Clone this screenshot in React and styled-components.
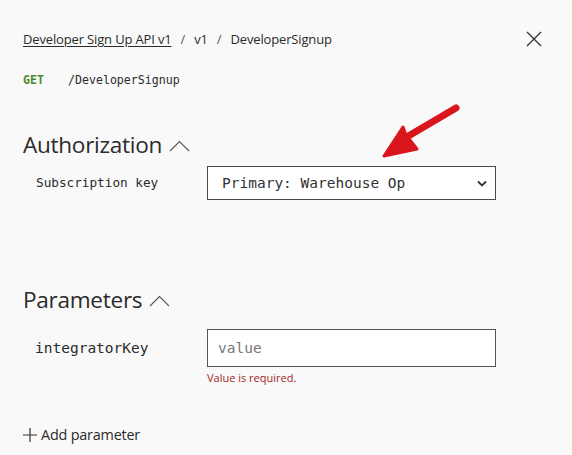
import React from "react";
import styled, { createGlobalStyle } from "styled-components";

const Global = createGlobalStyle`
  html, body {
    margin: 0;
    padding: 0;
    background: #f9f9f9;
  }
  body {
    font-family: "Open Sans", "Noto Sans", sans-serif;
    color: #2b2b2b;
  }
`;

const Page = styled.div`
  position: relative;
  width: 572px;
  height: 455px;
  overflow: hidden;
  padding: 0 30px 0 23px;
  box-sizing: border-box;
`;

const Header = styled.div`
  display: flex;
  align-items: center;
  justify-content: space-between;
  height: 28px;
  margin-top: 25px;
`;

const Crumbs = styled.div`
  display: flex;
  align-items: center;
  gap: 8px;
  font-size: 13px;
  letter-spacing: -0.15px;
  > a {
    color: #2b2b2b;
    text-decoration: underline;
    text-underline-offset: 2px;
  }
`;

const Sep = styled.span`
  color: #555;
  padding: 0 1px;
`;

const Close = styled.button`
  border: 0;
  background: none;
  padding: 0;
  width: 16px;
  height: 16px;
  display: flex;
  cursor: pointer;
`;

const Method = styled.div`
  display: flex;
  align-items: center;
  margin-top: 19px;
  height: 16px;
  font-family: "DejaVu Sans Mono", monospace;
  font-size: 11.6px;
  > b {
    color: #4a8a2a;
    width: 45px;
  }
  > span {
    color: #2b2b2b;
  }
`;

const Section = styled.section`
  margin-top: ${(p) => p.$top}px;
`;

const Heading = styled.h2`
  display: flex;
  align-items: center;
  gap: 7px;
  margin: 0;
  height: 30px;
  font-weight: 400;
  font-size: 22.6px;
  letter-spacing: -0.3px;
  color: #2b2b2b;
  > svg {
    margin-top: 4px;
  }
`;

const Row = styled.div`
  display: grid;
  grid-template-columns: 184px 289px;
  align-items: start;
  margin-top: ${(p) => p.$top}px;
`;

const Label = styled.div`
  font-family: "DejaVu Sans Mono", monospace;
  font-size: ${(p) => p.$size}px;
  color: #2b2b2b;
  padding-left: ${(p) => p.$pad}px;
  line-height: ${(p) => p.$lh}px;
`;

const SelectBox = styled.div`
  display: flex;
  align-items: center;
  justify-content: space-between;
  height: 34px;
  box-sizing: border-box;
  border: 1px solid #4a4a4a;
  background: #fff;
  padding: 0 8px 0 14px;
  font-family: "DejaVu Sans Mono", monospace;
  font-size: 14.5px;
  color: #333;
`;

const Field = styled.div`
  display: flex;
  flex-direction: column;
`;

const InputBox = styled.div`
  height: 38px;
  box-sizing: border-box;
  border: 1px solid #555;
  background: #fff;
  display: flex;
  align-items: center;
  padding-left: 10px;
  font-family: "DejaVu Sans Mono", monospace;
  font-size: 14.5px;
  color: #777;
`;

const Error = styled.div`
  color: #a4262c;
  font-size: 11px;
  margin-top: 3px;
`;

const AddParam = styled.button`
  display: flex;
  align-items: center;
  gap: 4px;
  margin-top: 40px;
  border: 0;
  background: none;
  padding: 0;
  font-family: "Open Sans", sans-serif;
  font-size: 14.4px;
  letter-spacing: -0.2px;
  color: #2b2b2b;
`;

const Pointer = styled.svg`
  position: absolute;
  left: 377px;
  top: 100px;
`;

const ChevronUp = () => (
  <svg width="21" height="12" viewBox="0 0 21 12" fill="none">
    <path d="M1 11 L10.5 1.5 L20 11" stroke="#555" strokeWidth="1.1" />
  </svg>
);

export default function App() {
  return (
    <Page>
      <Global />
      <Header>
        <Crumbs>
          <a>Developer Sign Up API v1</a>
          <Sep>/</Sep>
          <span>v1</span>
          <Sep>/</Sep>
          <span>DeveloperSignup</span>
        </Crumbs>
        <Close aria-label="close">
          <svg width="16" height="16" viewBox="0 0 16 16">
            <path d="M1 1 L15 15 M15 1 L1 15" stroke="#333" strokeWidth="1.3" />
          </svg>
        </Close>
      </Header>
      <Method>
        <b>GET</b>
        <span>/DeveloperSignup</span>
      </Method>

      <Section $top={41}>
        <Heading>
          Authorization
          <ChevronUp />
        </Heading>
        <Row $top={7}>
          <Label $size={12.7} $pad={13} $lh={34}>
            Subscription key
          </Label>
          <SelectBox>
            <span>Primary: Warehouse Op</span>
            <svg width="10" height="7" viewBox="0 0 10 7" fill="none">
              <path d="M1 1.5 L5 5.5 L9 1.5" stroke="#333" strokeWidth="1.8" />
            </svg>
          </SelectBox>
        </Row>
      </Section>

      <Section $top={84}>
        <Heading>
          Parameters
          <ChevronUp />
        </Heading>
        <Row $top={15}>
          <Label $size={14.5} $pad={12} $lh={38}>
            integratorKey
          </Label>
          <Field>
            <InputBox>value</InputBox>
            <Error>Value is required.</Error>
          </Field>
        </Row>
        <AddParam>
          <svg width="14" height="14" viewBox="0 0 14 14">
            <path d="M7 0 V14 M0 7 H14" stroke="#333" strokeWidth="1.2" />
          </svg>
          Add parameter
        </AddParam>
      </Section>

      <Pointer width="90" height="65" viewBox="0 0 90 65">
        <path
          d="M79 8 L28 38"
          stroke="#d8161b"
          strokeWidth="7"
          strokeLinecap="round"
        />
        <path
          d="M7 56 L26 27 L29 35 L40 49 Z"
          fill="#d8161b"
          stroke="#d8161b"
          strokeWidth="3"
          strokeLinejoin="round"
        />
      </Pointer>
    </Page>
  );
}
